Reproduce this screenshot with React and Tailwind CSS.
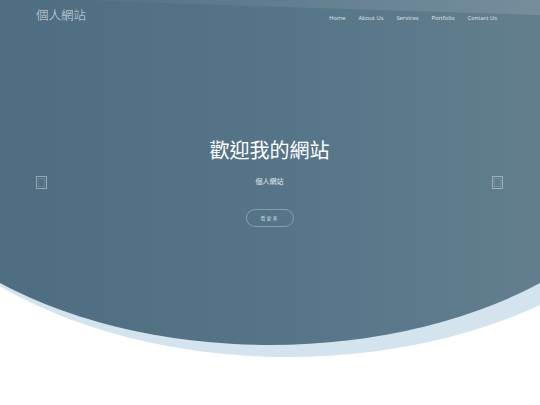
import React from "react";

function Background() {
  return (
    <svg className="absolute inset-0 w-full h-full" viewBox="0 0 540 405" preserveAspectRatio="none">
      <defs>
        <linearGradient id="hero" x1="0" y1="0" x2="1" y2="0">
          <stop offset="0" stopColor="#4b6a7c" />
          <stop offset="0.5" stopColor="#557488" />
          <stop offset="1" stopColor="#698492" />
        </linearGradient>
        <linearGradient id="band" x1="0" y1="0" x2="1" y2="0">
          <stop offset="0" stopColor="#ffffff" stopOpacity="0.03" />
          <stop offset="1" stopColor="#ffffff" stopOpacity="0.12" />
        </linearGradient>
      </defs>
      <rect x="0" y="0" width="540" height="405" fill="#ffffff" />
      <ellipse cx="288" cy="97" rx="420" ry="260" fill="#d3e4ee" />
      <ellipse cx="270" cy="102" rx="405" ry="243" fill="url(#hero)" />
      <path d="M80,0 L540,0 L540,15 Q300,8 80,0 Z" fill="url(#band)" />
    </svg>
  );
}

function Box() {
  return <div className="w-[11px] h-[13px] border border-white/40 outline outline-1 outline-white/15 outline-offset-[-3px]" />;
}

export default function App() {
  const sans = { fontFamily: '"Open Sans", "Noto Sans CJK TC", sans-serif' };
  return (
    <div className="relative w-full h-[405px] overflow-hidden bg-white" style={sans}>
      <Background />
      <div className="relative">
        <header className="h-[26px] flex items-start justify-between pl-[36px] pr-[43px] pt-[6px]">
          <div className="text-[12.5px] leading-[18px] font-light text-[#cfdae1]" style={{ fontFamily: '"Noto Sans CJK TC", sans-serif' }}>
            個人網站
          </div>
          <nav className="flex gap-[13px] text-[5.8px] text-[#e0e8ed] mt-[8px]">
            <span>Home</span>
            <span>About Us</span>
            <span>Services</span>
            <span>Portfolio</span>
            <span>Contact Us</span>
          </nav>
        </header>
        <div className="mt-[112px] flex items-center justify-between pl-[36px] pr-[37px]">
          <Box />
          <div className="flex flex-col items-center" style={{ fontFamily: '"Noto Sans CJK TC", sans-serif' }}>
            <h1 className="text-[20px] leading-[24px] font-normal text-white">歡迎我的網站</h1>
            <p className="mt-[14px] text-[7px] leading-[10px] text-[#e3eaee]">個人網站</p>
            <div className="mt-[23px] w-[48px] h-[18px] rounded-full border border-white/30 flex items-center justify-center text-[5px] text-[#c5d2da] tracking-[1px]">
              看更多
            </div>
          </div>
          <Box />
        </div>
      </div>
    </div>
  );
}
